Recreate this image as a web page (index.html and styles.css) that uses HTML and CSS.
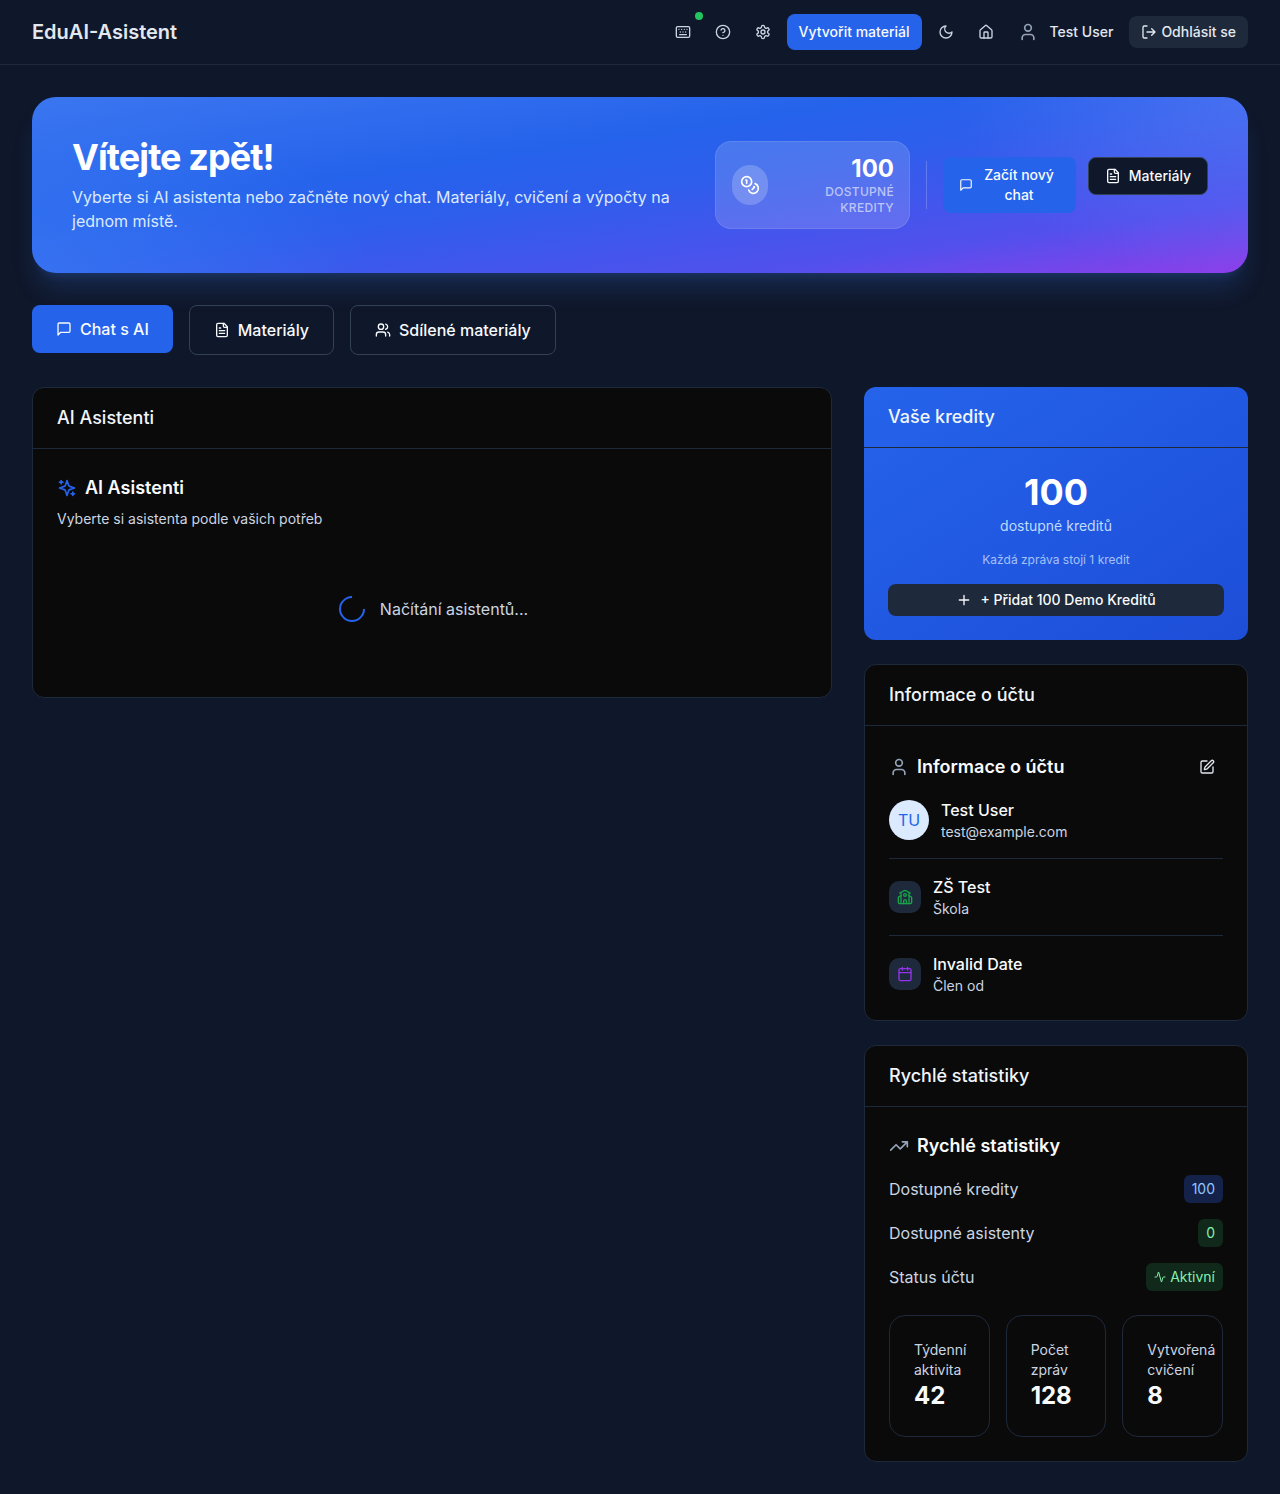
FILE: index.html
```html
<!DOCTYPE html>
<html lang="cs">
<head>
  <meta charset="UTF-8" />
  <meta name="viewport" content="width=device-width, initial-scale=1.0"/>
  <title>EduAI-Asistent</title>
  <link rel="stylesheet" href="styles.css">
</head>
<body>
  <svg class="sprite" xmlns="http://www.w3.org/2000/svg">
    <symbol id="i-keyboard" viewBox="0 0 24 24"><rect x="2" y="4" width="20" height="16" rx="2"/><path d="M6 8h.001M10 8h.001M14 8h.001M18 8h.001M8 12h.001M12 12h.001M16 12h.001M7 16h10"/></symbol>
    <symbol id="i-help" viewBox="0 0 24 24"><circle cx="12" cy="12" r="10"/><path d="M9.09 9a3 3 0 0 1 5.83 1c0 2-3 3-3 3M12 17h.01"/></symbol>
    <symbol id="i-settings" viewBox="0 0 24 24"><path d="M12.22 2h-.44a2 2 0 0 0-2 2v.18a2 2 0 0 1-1 1.73l-.43.25a2 2 0 0 1-2 0l-.15-.08a2 2 0 0 0-2.73.73l-.22.38a2 2 0 0 0 .73 2.73l.15.1a2 2 0 0 1 1 1.72v.51a2 2 0 0 1-1 1.74l-.15.09a2 2 0 0 0-.73 2.73l.22.38a2 2 0 0 0 2.73.73l.15-.08a2 2 0 0 1 2 0l.43.25a2 2 0 0 1 1 1.73V20a2 2 0 0 0 2 2h.44a2 2 0 0 0 2-2v-.18a2 2 0 0 1 1-1.73l.43-.25a2 2 0 0 1 2 0l.15.08a2 2 0 0 0 2.73-.73l.22-.39a2 2 0 0 0-.73-2.73l-.15-.08a2 2 0 0 1-1-1.74v-.5a2 2 0 0 1 1-1.74l.15-.09a2 2 0 0 0 .73-2.73l-.22-.38a2 2 0 0 0-2.73-.73l-.15.08a2 2 0 0 1-2 0l-.43-.25a2 2 0 0 1-1-1.73V4a2 2 0 0 0-2-2z"/><circle cx="12" cy="12" r="3"/></symbol>
    <symbol id="i-moon" viewBox="0 0 24 24"><path d="M12 3a6 6 0 0 0 9 9 9 9 0 1 1-9-9Z"/></symbol>
    <symbol id="i-home" viewBox="0 0 24 24"><path d="M15 21v-8a1 1 0 0 0-1-1h-4a1 1 0 0 0-1 1v8"/><path d="M3 10a2 2 0 0 1 .709-1.528l7-5.999a2 2 0 0 1 2.582 0l7 5.999A2 2 0 0 1 21 10v9a2 2 0 0 1-2 2H5a2 2 0 0 1-2-2z"/></symbol>
    <symbol id="i-user" viewBox="0 0 24 24"><path d="M19 21v-2a4 4 0 0 0-4-4H9a4 4 0 0 0-4 4v2"/><circle cx="12" cy="7" r="4"/></symbol>
    <symbol id="i-logout" viewBox="0 0 24 24"><path d="M9 21H5a2 2 0 0 1-2-2V5a2 2 0 0 1 2-2h4"/><path d="M16 17l5-5-5-5M21 12H9"/></symbol>
    <symbol id="i-coins" viewBox="0 0 24 24"><circle cx="8" cy="8" r="6"/><path d="M18.09 10.37A6 6 0 1 1 10.34 18M7 6h1v4M16.71 13.88l.7.71-2.82 2.82"/></symbol>
    <symbol id="i-chat" viewBox="0 0 24 24"><path d="M21 15a2 2 0 0 1-2 2H7l-4 4V5a2 2 0 0 1 2-2h14a2 2 0 0 1 2 2z"/></symbol>
    <symbol id="i-file" viewBox="0 0 24 24"><path d="M15 2H6a2 2 0 0 0-2 2v16a2 2 0 0 0 2 2h12a2 2 0 0 0 2-2V7Z"/><path d="M14 2v4a2 2 0 0 0 2 2h4M10 9H8M16 13H8M16 17H8"/></symbol>
    <symbol id="i-users" viewBox="0 0 24 24"><path d="M16 21v-2a4 4 0 0 0-4-4H6a4 4 0 0 0-4 4v2"/><circle cx="9" cy="7" r="4"/><path d="M22 21v-2a4 4 0 0 0-3-3.87M16 3.13a4 4 0 0 1 0 7.75"/></symbol>
    <symbol id="i-sparkles" viewBox="0 0 24 24"><path d="M12 3l-1.912 5.813a2 2 0 0 1-1.275 1.275L3 12l5.813 1.912a2 2 0 0 1 1.275 1.275L12 21l1.912-5.813a2 2 0 0 1 1.275-1.275L21 12l-5.813-1.912a2 2 0 0 1-1.275-1.275L12 3Z"/><path d="M5 3v4M19 17v4M3 5h4M17 19h4"/></symbol>
    <symbol id="i-plus" viewBox="0 0 24 24"><path d="M5 12h14M12 5v14"/></symbol>
    <symbol id="i-edit" viewBox="0 0 24 24"><path d="M12 3H5a2 2 0 0 0-2 2v14a2 2 0 0 0 2 2h14a2 2 0 0 0 2-2v-7"/><path d="M18.375 2.625a1 1 0 0 1 3 3l-9.013 9.014a2 2 0 0 1-.853.505l-2.873.84a.5.5 0 0 1-.62-.62l.84-2.873a2 2 0 0 1 .506-.852z"/></symbol>
    <symbol id="i-school" viewBox="0 0 24 24"><path d="M14 22v-4a2 2 0 1 0-4 0v4"/><path d="M18 10l3.447 1.724a1 1 0 0 1 .553.894V20a2 2 0 0 1-2 2H4a2 2 0 0 1-2-2v-7.382a1 1 0 0 1 .553-.894L6 10"/><path d="M18 5v17M4 6l7.106-3.553a2 2 0 0 1 1.788 0L20 6M6 5v17"/><circle cx="12" cy="9" r="2"/></symbol>
    <symbol id="i-calendar" viewBox="0 0 24 24"><path d="M8 2v4M16 2v4"/><rect x="3" y="4" width="18" height="18" rx="2"/><path d="M3 10h18"/></symbol>
    <symbol id="i-trending" viewBox="0 0 24 24"><path d="M22 7l-8.5 8.5-5-5L2 17M16 7h6v6"/></symbol>
    <symbol id="i-activity" viewBox="0 0 24 24"><path d="M22 12h-2.48a2 2 0 0 0-1.93 1.46l-2.35 8.36a.25.25 0 0 1-.48 0L9.24 2.18a.25.25 0 0 0-.48 0l-2.35 8.36A2 2 0 0 1 4.49 12H2"/></symbol>
  </svg>

  <header class="topbar">
    <div class="logo">EduAI-Asistent</div>
    <nav class="topnav">
      <button class="ghost has-dot"><svg class="icon"><use href="#i-keyboard"/></svg><span class="dot"></span></button>
      <button class="ghost"><svg class="icon"><use href="#i-help"/></svg></button>
      <button class="ghost"><svg class="icon"><use href="#i-settings"/></svg></button>
      <button class="create-btn">Vytvořit materiál</button>
      <button class="ghost"><svg class="icon"><use href="#i-moon"/></svg></button>
      <button class="ghost"><svg class="icon"><use href="#i-home"/></svg></button>
      <div class="nav-user">
        <svg class="icon icon-20 muted"><use href="#i-user"/></svg>
        <span>Test User</span>
      </div>
      <button class="logout-btn"><svg class="icon"><use href="#i-logout"/></svg>Odhlásit se</button>
    </nav>
  </header>

  <main class="page">
    <section class="hero">
      <div class="hero-text">
        <h1>Vítejte zpět!</h1>
        <p>Vyberte si AI asistenta nebo začněte nový chat. Materiály, cvičení a výpočty na jednom místě.</p>
      </div>
      <div class="hero-side">
        <div class="hero-stat">
          <div class="coin-wrap"><svg class="icon icon-20"><use href="#i-coins"/></svg></div>
          <div class="hero-stat-text">
            <div class="hero-stat-num">100</div>
            <div class="hero-stat-label">Dostupné kredity</div>
          </div>
        </div>
        <div class="hero-divider"></div>
        <div class="hero-actions">
          <button class="hero-chat"><svg class="icon icon-14"><use href="#i-chat"/></svg><span>Začít nový chat</span></button>
          <button class="hero-mat"><svg class="icon"><use href="#i-file"/></svg>Materiály</button>
        </div>
      </div>
    </section>

    <div class="tabs">
      <button class="tab active"><svg class="icon"><use href="#i-chat"/></svg>Chat s AI</button>
      <button class="tab"><svg class="icon"><use href="#i-file"/></svg>Materiály</button>
      <button class="tab"><svg class="icon"><use href="#i-users"/></svg>Sdílené materiály</button>
    </div>

    <div class="columns">
      <section class="card assistants">
        <div class="card-head">AI Asistenti</div>
        <div class="card-body">
          <h3 class="section-title"><svg class="icon icon-20 blue"><use href="#i-sparkles"/></svg>AI Asistenti</h3>
          <p class="section-sub">Vyberte si asistenta podle vašich potřeb</p>
          <div class="loading"><span class="spinner"></span>Načítání asistentů...</div>
        </div>
      </section>

      <aside class="sidebar">
        <section class="credits">
          <div class="credits-head">Vaše kredity</div>
          <div class="credits-body">
            <div class="credits-num">100</div>
            <div class="credits-label">dostupné kreditů</div>
            <div class="credits-note">Každá zpráva stojí 1 kredit</div>
            <button class="credits-btn"><svg class="icon"><use href="#i-plus"/></svg>+ Přidat 100 Demo Kreditů</button>
          </div>
        </section>

        <section class="card">
          <div class="card-head">Informace o účtu</div>
          <div class="card-body">
            <div class="title-row">
              <h3 class="section-title"><svg class="icon icon-20 muted"><use href="#i-user"/></svg>Informace o účtu</h3>
              <svg class="icon edit"><use href="#i-edit"/></svg>
            </div>
            <div class="profile">
              <div class="avatar">TU</div>
              <div>
                <div class="info-main">Test User</div>
                <div class="info-sub">test@example.com</div>
              </div>
            </div>
            <div class="info-row">
              <div class="info-icon green"><svg class="icon"><use href="#i-school"/></svg></div>
              <div>
                <div class="info-main">ZŠ Test</div>
                <div class="info-sub">Škola</div>
              </div>
            </div>
            <div class="info-row">
              <div class="info-icon purple"><svg class="icon"><use href="#i-calendar"/></svg></div>
              <div>
                <div class="info-main">Invalid Date</div>
                <div class="info-sub">Člen od</div>
              </div>
            </div>
          </div>
        </section>

        <section class="card">
          <div class="card-head">Rychlé statistiky</div>
          <div class="card-body">
            <h3 class="section-title stats-title"><svg class="icon icon-20 muted"><use href="#i-trending"/></svg>Rychlé statistiky</h3>
            <div class="stat-row"><span>Dostupné kredity</span><span class="badge badge-blue">100</span></div>
            <div class="stat-row"><span>Dostupné asistenty</span><span class="badge badge-green">0</span></div>
            <div class="stat-row"><span>Status účtu</span><span class="badge badge-green"><svg class="icon icon-12"><use href="#i-activity"/></svg>Aktivní</span></div>
            <div class="tiles">
              <div class="tile"><div class="tile-label">Týdenní aktivita</div><div class="tile-num">42</div></div>
              <div class="tile"><div class="tile-label">Počet zpráv</div><div class="tile-num">128</div></div>
              <div class="tile"><div class="tile-label">Vytvořená cvičení</div><div class="tile-num">8</div></div>
            </div>
          </div>
        </section>
      </aside>
    </div>
  </main>
</body>
</html>
```

FILE: styles.css
```css
* {
  box-sizing: border-box;
}

body {
  margin: 0;
  background: #0f172a;
  color: #f8fafc;
  font-family: 'Inter', 'Liberation Sans', sans-serif;
  font-size: 16px;
  line-height: 24px;
}

button {
  font-family: inherit;
  border: none;
  cursor: pointer;
  color: inherit;
}

h1, h3, p {
  margin: 0;
}

.sprite {
  display: none;
}

.icon {
  width: 16px;
  height: 16px;
  flex: none;
  fill: none;
  stroke: currentColor;
  stroke-width: 2;
  stroke-linecap: round;
  stroke-linejoin: round;
}

.icon-20 { width: 20px; height: 20px; }
.icon-14 { width: 14px; height: 14px; }
.icon-12 { width: 12px; height: 12px; }
.muted { color: #94a3b8; }
.blue { color: #2563eb; }

/* top bar */
.topbar {
  height: 65px;
  padding: 0 32px;
  display: flex;
  align-items: center;
  justify-content: space-between;
  border-bottom: 1px solid #1e293b;
}

.logo {
  font-size: 20px;
  font-weight: 600;
  color: #e2e8f0;
}

.topnav {
  display: flex;
  align-items: center;
}

.ghost {
  position: relative;
  width: 40px;
  height: 36px;
  padding: 0;
  background: none;
  color: #cbd5e1;
  display: flex;
  align-items: center;
  justify-content: center;
}

.dot {
  position: absolute;
  top: -2px;
  right: 0;
  width: 8px;
  height: 8px;
  border-radius: 50%;
  background: #22c55e;
}

.create-btn {
  height: 36px;
  margin: 0 4px;
  padding: 0 12px;
  background: #2563eb;
  border-radius: 8px;
  font-size: 14px;
  line-height: 20px;
  font-weight: 500;
  color: #f8fafc;
}

.nav-user {
  display: flex;
  align-items: center;
  gap: 12px;
  margin-left: 12px;
  font-size: 14px;
  font-weight: 500;
  color: #e2e8f0;
}

.logout-btn {
  height: 32px;
  margin-left: 16px;
  padding: 0 12px;
  display: flex;
  align-items: center;
  gap: 4px;
  background: #1e293b;
  border-radius: 8px;
  font-size: 14px;
  line-height: 20px;
  font-weight: 500;
  color: #e2e8f0;
}

.page {
  padding: 32px;
}

/* hero */
.hero {
  height: 176px;
  padding: 0 40px;
  display: flex;
  align-items: center;
  justify-content: space-between;
  border-radius: 24px;
  background:
    radial-gradient(ellipse 340px 180px at 0% 100%, rgba(59, 122, 243, 0.7), transparent),
    radial-gradient(ellipse 300px 180px at 100% 0%, rgba(96, 130, 246, 0.5), transparent),
    linear-gradient(to bottom right, #3b76f0, #2563eb 35%, #2d5eec 50%, #5250ed 80%, #8f3ee9);
  box-shadow: 0 20px 25px -5px rgba(59, 130, 246, 0.18), 0 8px 10px -6px rgba(59, 130, 246, 0.18);
}

.hero-text {
  width: 603px;
}

.hero-text h1 {
  font-size: 36px;
  line-height: 40px;
  font-weight: 700;
  letter-spacing: -0.9px;
  color: #fff;
  margin-bottom: 8px;
}

.hero-text p {
  font-size: 16px;
  line-height: 24px;
  color: #dbeafe;
}

.hero-side {
  display: flex;
  align-items: center;
  gap: 16px;
}

.hero-stat {
  width: 195.5px;
  height: 88px;
  padding: 0 15px 0 16px;
  display: flex;
  align-items: center;
  justify-content: space-between;
  background: rgba(255, 255, 255, 0.15);
  border: 1px solid rgba(255, 255, 255, 0.1);
  border-radius: 16px;
}

.coin-wrap {
  width: 36px;
  height: 40px;
  border-radius: 18px;
  background: rgba(255, 255, 255, 0.2);
  display: flex;
  align-items: center;
  justify-content: center;
  color: #fff;
}

.hero-stat-text {
  width: 90px;
  text-align: right;
}

.hero-stat-num {
  font-size: 24px;
  line-height: 28px;
  margin-bottom: 1px;
  font-weight: 700;
  color: #fff;
}

.hero-stat-label {
  font-size: 12px;
  line-height: 16px;
  font-weight: 500;
  text-transform: uppercase;
  letter-spacing: 0.3px;
  color: rgba(255, 255, 255, 0.6);
}

.hero-divider {
  width: 1px;
  height: 48px;
  background: rgba(255, 255, 255, 0.2);
}

.hero-actions {
  display: flex;
  align-items: flex-start;
  gap: 12px;
}

.hero-chat {
  width: 133px;
  height: 56px;
  padding: 0 19px 0 16px;
  display: flex;
  align-items: center;
  gap: 8px;
  background: #2563eb;
  border-radius: 8px;
  font-size: 14px;
  line-height: 20px;
  font-weight: 500;
  color: #f8fafc;
}

.hero-chat span {
  flex: 1;
  text-align: center;
}

.hero-mat {
  width: 120px;
  height: 38px;
  display: flex;
  align-items: center;
  justify-content: center;
  gap: 8px;
  background: #0f172a;
  border: 1px solid #334155;
  border-radius: 8px;
  font-size: 14px;
  line-height: 20px;
  font-weight: 500;
  color: #f8fafc;
}

/* tabs */
.tabs {
  margin-top: 32px;
  display: flex;
  align-items: flex-start;
  gap: 16px;
}

.tab {
  padding: 12px 24px;
  display: flex;
  align-items: center;
  gap: 8px;
  background: none;
  border: 1px solid #334155;
  border-radius: 8px;
  font-size: 16px;
  line-height: 24px;
  font-weight: 500;
  color: #f8fafc;
}

.tab.active {
  background: #2563eb;
  border: none;
}

/* columns */
.columns {
  margin-top: 32px;
  display: grid;
  grid-template-columns: 800px 384px;
  gap: 32px;
  align-items: start;
}

.sidebar {
  display: flex;
  flex-direction: column;
  gap: 24px;
}

.card {
  background: #0a0a0a;
  border: 1px solid #1e293b;
  border-radius: 12px;
}

.card-head {
  padding: 16px 24px;
  border-bottom: 1px solid #1e293b;
  font-size: 18px;
  line-height: 28px;
  font-weight: 500;
  color: #f1f5f9;
}

.card-body {
  padding: 24px;
}

.section-title {
  display: flex;
  align-items: center;
  gap: 8px;
  font-size: 18px;
  line-height: 28px;
  font-weight: 600;
  color: #f8fafc;
}

.assistants .section-title {
  margin-top: 1px;
}

.section-sub {
  margin-top: 7px;
  font-size: 14px;
  line-height: 20px;
  color: #cbd5e1;
}

.assistants .card-body {
  height: 248px;
}

.loading {
  margin-top: 67px;
  padding-left: 3px;
  display: flex;
  align-items: center;
  justify-content: center;
  gap: 15px;
  color: #cbd5e1;
}

.spinner {
  width: 26px;
  height: 26px;
  border-radius: 50%;
  border: 2px solid #2563eb;
  border-top-color: transparent;
  transform: rotate(45deg);
}

/* credits */
.credits {
  border-radius: 12px;
  background: linear-gradient(to bottom right, #2563eb, #1d4ed8);
}

.credits-head {
  padding: 16px 24px;
  border-bottom: 1px solid #1e293b;
  font-size: 18px;
  line-height: 28px;
  font-weight: 500;
  color: #f1f5f9;
}

.credits-body {
  padding: 24px;
  text-align: center;
}

.credits-num {
  font-size: 36px;
  line-height: 40px;
  font-weight: 700;
  color: #fff;
}

.credits-label {
  margin-top: 4px;
  font-size: 14px;
  line-height: 20px;
  color: #bfdbfe;
}

.credits-note {
  margin-top: 16px;
  font-size: 12px;
  line-height: 16px;
  color: #a5c2f8;
}

.credits-btn {
  width: 100%;
  height: 32px;
  margin-top: 16px;
  display: flex;
  align-items: center;
  justify-content: center;
  gap: 8px;
  background: #1e293b;
  border-radius: 8px;
  font-size: 14px;
  line-height: 20px;
  font-weight: 500;
  color: #f8fafc;
}

/* account info */
.title-row {
  display: flex;
  align-items: center;
  justify-content: space-between;
  padding-top: 3px;
  padding-right: 8px;
}

.edit {
  color: #e2e8f0;
}

.profile {
  margin-top: 17px;
  padding-bottom: 16px;
  display: flex;
  align-items: center;
  gap: 12px;
  border-bottom: 1px solid #1e293b;
}

.avatar {
  width: 40px;
  height: 40px;
  border-radius: 50%;
  background: #dbeafe;
  color: #2563eb;
  display: flex;
  align-items: center;
  justify-content: center;
}

.info-main {
  font-size: 16px;
  line-height: 24px;
  font-weight: 500;
  color: #f8fafc;
}

.info-sub {
  font-size: 14px;
  line-height: 20px;
  color: #cbd5e1;
}

.info-row {
  padding: 16px 0;
  display: flex;
  align-items: center;
  gap: 12px;
  border-bottom: 1px solid #1e293b;
}

.info-row:last-child {
  border-bottom: none;
  padding-bottom: 0;
}

.info-icon {
  width: 32px;
  height: 32px;
  border-radius: 10px;
  background: #1e293b;
  display: flex;
  align-items: center;
  justify-content: center;
}

.info-icon.green { color: #16a34a; }
.info-icon.purple { color: #9333ea; }

/* stats */
.stats-title {
  margin-top: 1px;
  margin-bottom: -1px;
}

.stat-row {
  height: 28px;
  margin-top: 16px;
  display: flex;
  align-items: center;
  justify-content: space-between;
  color: #cbd5e1;
}

.badge {
  height: 28px;
  padding: 0 8px;
  display: flex;
  align-items: center;
  gap: 4px;
  border-radius: 6px;
  font-size: 14px;
}

.badge-blue {
  background: #14224a;
  color: #93c5fd;
}

.badge-green {
  background: #10291b;
  color: #86efac;
}

.tiles {
  margin-top: 24px;
  display: grid;
  grid-template-columns: repeat(3, minmax(0, 1fr));
  gap: 16px;
}

.tile {
  height: 122px;
  padding: 24px;
  border: 1px solid #1e293b;
  border-radius: 16px;
}

.tile-label {
  font-size: 14px;
  line-height: 20px;
  color: #cbd5e1;
}

.tile-num {
  font-size: 24px;
  line-height: 32px;
  font-weight: 700;
  color: #f8fafc;
}
```
